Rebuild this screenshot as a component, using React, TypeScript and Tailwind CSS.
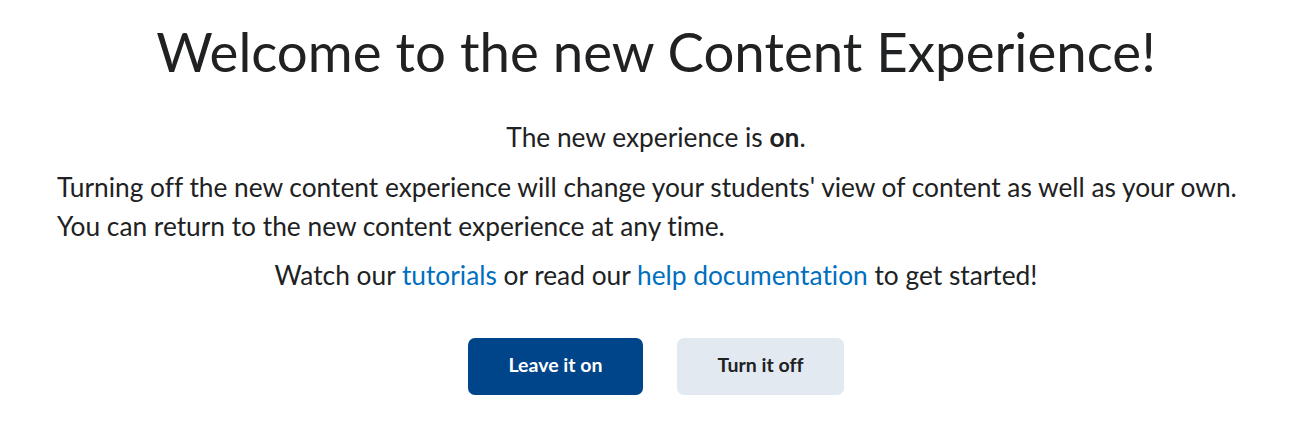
import React from 'react';

const App: React.FC = () => {
  return (
    <div
      className="min-h-screen bg-white text-[#202122] [font-variant-ligatures:none]"
      style={{ fontFamily: 'Lato, "Noto Sans", sans-serif' }}
    >
      <div className="ml-[57px] w-[1198px] pt-[18px]">
        <h1 className="text-center text-[54.6px] leading-[66px] font-normal">
          Welcome to the new Content Experience!
        </h1>
        <p className="mt-[34px] text-center text-[26.3px] leading-[39px]">
          The new experience is <b className="font-bold">on</b>.
        </p>
        <p className="mt-[11px] text-[26.3px] leading-[39px]">
          Turning off the new content experience will change your students' view of content as well as your own.
          <br />
          You can return to the new content experience at any time.
        </p>
        <p className="mt-[10px] text-center text-[26.3px] leading-[39px]">
          Watch our <a className="text-[#006fbf]" href="#">tutorials</a> or read our{' '}
          <a className="text-[#006fbf]" href="#">help documentation</a> to get started!
        </p>
        <div className="mt-[43px] flex justify-center gap-[34px]">
          <button className="h-[57px] w-[175px] rounded-[7px] bg-[#004489] pb-[3px] text-[19.5px] font-bold text-white">
            Leave it on
          </button>
          <button className="h-[57px] w-[167px] rounded-[7px] bg-[#e3e9f1] pb-[3px] text-[19.5px] font-bold text-[#202122]">
            Turn it off
          </button>
        </div>
      </div>
    </div>
  );
};

export default App;
